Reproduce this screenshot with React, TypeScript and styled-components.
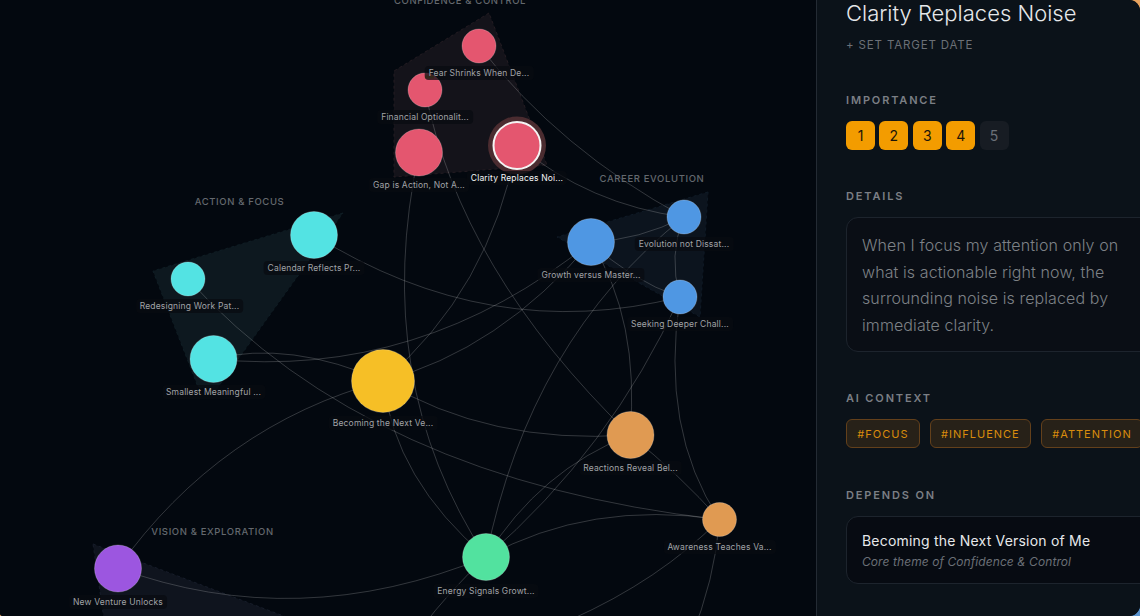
import React from "react";
import styled, { createGlobalStyle } from "styled-components";

const Global = createGlobalStyle`
  html, body { margin: 0; padding: 0; height: 100%; overflow: hidden; }
  body {
    background:
      radial-gradient(circle at 100% 0, #e8a35f 16px, transparent 16px),
      radial-gradient(circle at 100% 100%, #5b94cf 16px, transparent 16px),
      radial-gradient(circle at 0 100%, #e8a35f 6px, transparent 6px);
    font-family: Inter, "Liberation Sans", sans-serif;
  }
`;

const Shell = styled.div`
  width: 1140px;
  height: 616px;
  display: flex;
  overflow: hidden;
  border-radius: 0 11px 11px 3px;
  background: #03080f;
`;

const Canvas = styled.div`
  position: relative;
  flex: 0 0 816px;
  height: 616px;
  overflow: hidden;
  background: #03080f;
`;

const Graph = styled.svg`
  position: absolute;
  inset: 0;
  display: block;
`;

const NodeLabel = styled.div<{ $x: number; $y: number; $active?: boolean }>`
  position: absolute;
  left: ${(p) => p.$x}px;
  top: ${(p) => p.$y}px;
  transform: translate(-50%, -50%);
  padding: 2px 4px;
  border-radius: 4px;
  background: rgba(9, 11, 16, 0.72);
  color: ${(p) => (p.$active ? "#f4f5f6" : "#a1a3a7")};
  font-size: 8.5px;
  line-height: 10px;
  letter-spacing: 0.17px;
  white-space: nowrap;
`;

const ClusterLabel = styled.div<{ $x: number; $y: number }>`
  position: absolute;
  left: ${(p) => p.$x}px;
  top: ${(p) => p.$y}px;
  transform: translate(-50%, -50%);
  color: #64686e;
  font-size: 9.5px;
  line-height: 12px;
  font-weight: 500;
  letter-spacing: 0.62px;
  white-space: nowrap;
`;

const Panel = styled.aside`
  flex: 0 0 360px;
  height: 616px;
  box-sizing: border-box;
  padding-left: 29px;
  border-left: 1px solid #242b34;
  background: #0b1219;
  overflow: hidden;
`;

const Title = styled.h1`
  margin: 0;
  color: #e6e8ea;
  font-size: 22px;
  line-height: 26px;
  font-weight: 300;
  white-space: nowrap;
`;

const DateLink = styled.div`
  margin-top: 12px;
  color: #6b7077;
  font-size: 11.5px;
  line-height: 14px;
  letter-spacing: 0.85px;
`;

const Section = styled.section<{ $gap: number }>`
  margin-top: ${(p) => p.$gap}px;
`;

const SectionLabel = styled.h2`
  margin: 0 0 14px;
  color: #7b7f85;
  font-size: 11px;
  line-height: 14px;
  font-weight: 600;
  letter-spacing: 1.85px;
`;

const Scale = styled.div`
  display: flex;
  gap: 4.4px;
`;

const ScaleButton = styled.div<{ $on: boolean }>`
  width: 29px;
  height: 29px;
  display: flex;
  align-items: center;
  justify-content: center;
  border-radius: 6px;
  background: ${(p) => (p.$on ? "#f39c00" : "#171c23")};
  color: ${(p) => (p.$on ? "#1b1509" : "#6b7077")};
  font-size: 14px;
`;

const DetailBox = styled.div`
  width: 328px;
  height: 135px;
  box-sizing: border-box;
  padding: 14px 15px;
  border: 1px solid #1d242d;
  border-radius: 12px;
  background: #0a0e15;
  color: #7d8186;
  font-size: 16px;
  line-height: 26.5px;
  font-weight: 300;
  letter-spacing: 0.1px;
`;

const Line = styled.div`
  white-space: nowrap;
`;

const Tags = styled.div`
  display: flex;
  gap: 10px;
`;

const Tag = styled.div`
  flex: none;
  height: 29px;
  box-sizing: border-box;
  display: flex;
  align-items: center;
  padding: 0 10.3px;
  border: 1px solid #63401b;
  border-radius: 6px;
  background: #272118;
  color: #d98c0c;
  font-size: 11px;
  letter-spacing: 1px;
`;

const DependCard = styled.div`
  width: 328px;
  height: 68px;
  box-sizing: border-box;
  padding: 13.5px 15px;
  border: 1px solid #1d242d;
  border-radius: 12px;
  background: #070b12;
`;

const DependTitle = styled.div`
  color: #e6e8ea;
  font-size: 14px;
  line-height: 20px;
  letter-spacing: 0.2px;
`;

const DependSub = styled.div`
  margin-top: 3px;
  color: #6b7077;
  font-size: 12px;
  line-height: 15px;
  font-style: italic;
  letter-spacing: 0.08px;
  white-space: nowrap;
`;

const PINK = "#e4566f";
const CYAN = "#53e3e3";
const BLUE = "#4f97e3";
const ORANGE = "#e09a52";

const hulls = [
  { points: "489,13 394,71 394,177 547,165", fill: "#14131a", stroke: "#241c22" },
  { points: "343,213 153,271 198,387 216,390", fill: "#0d181f", stroke: "#0f1d24" },
  { points: "708,192 557,237 700,317", fill: "#0c141e", stroke: "#0f1a26" },
  { points: "93,544 400,660 110,660", fill: "#0f141e", stroke: "#171d2a" },
];

const edges = [
  "M479 46Q560 150 684 217",
  "M517 145Q590 205 684 217",
  "M425 90Q460 270 630 435",
  "M419 152Q370 380 486 557",
  "M383 381Q395 480 486 557",
  "M517 145Q490 290 383 381",
  "M591 242Q640 240 684 217",
  "M591 242Q630 280 680 297",
  "M684 217Q668 255 680 297",
  "M684 217Q530 340 486 557",
  "M680 297Q610 450 486 557",
  "M591 242Q640 320 630 435",
  "M680 297Q660 430 719.5 519.5",
  "M719.5 519.5Q715 580 690 640",
  "M630 435Q540 470 486 557",
  "M486 557Q590 500 719.5 519.5",
  "M383 381Q490 445 630 435",
  "M188 279Q370 480 719.5 519.5",
  "M213 359Q290 340 383 381",
  "M213 359Q420 380 591 242",
  "M383 381Q500 350 591 242",
  "M314 235Q490 345 680 297",
  "M486 557Q298 634 118 568",
  "M486 557Q450 590 420 630",
  "M719.5 519.5Q660 580 570 620",
  "M118 568Q220 425 383 381",
  "M630 435Q680 475 719.5 519.5",
];

const nodes = [
  { x: 479, y: 46, r: 17, c: PINK },
  { x: 425, y: 90, r: 17, c: PINK },
  { x: 419, y: 152.5, r: 23.5, c: PINK },
  { x: 314, y: 235, r: 23.5, c: CYAN },
  { x: 188, y: 279, r: 17, c: CYAN },
  { x: 213.5, y: 359, r: 23.5, c: CYAN },
  { x: 383, y: 381, r: 31.5, c: "#f6bf26" },
  { x: 591, y: 242, r: 23.5, c: BLUE },
  { x: 684, y: 217, r: 17, c: BLUE },
  { x: 680, y: 297, r: 17, c: BLUE },
  { x: 630.5, y: 435, r: 23.5, c: ORANGE },
  { x: 719.5, y: 519.5, r: 17, c: ORANGE },
  { x: 486, y: 557, r: 23.5, c: "#52e29f" },
  { x: 118, y: 568.5, r: 23.5, c: "#9c56e0" },
];

const nodeLabels = [
  { x: 479, y: 72.5, t: "Fear Shrinks When De..." },
  { x: 425, y: 116.5, t: "Financial Optionalit..." },
  { x: 419, y: 185, t: "Gap is Action, Not A..." },
  { x: 517, y: 178, t: "Clarity Replaces Noi...", active: true },
  { x: 314, y: 268, t: "Calendar Reflects Pr..." },
  { x: 189.5, y: 306, t: "Redesigning Work Pat..." },
  { x: 213.5, y: 392, t: "Smallest Meaningful ..." },
  { x: 383, y: 423, t: "Becoming the Next Ve..." },
  { x: 591, y: 275, t: "Growth versus Master..." },
  { x: 684, y: 244, t: "Evolution not Dissat..." },
  { x: 680, y: 324, t: "Seeking Deeper Chall..." },
  { x: 630.5, y: 468, t: "Reactions Reveal Bel..." },
  { x: 719.5, y: 546.5, t: "Awareness Teaches Va..." },
  { x: 486, y: 591, t: "Energy Signals Growt..." },
  { x: 118, y: 601.5, t: "New Venture Unlocks" },
];

const clusters = [
  { x: 460, y: 1, t: "CONFIDENCE & CONTROL" },
  { x: 239.5, y: 201.5, t: "ACTION & FOCUS" },
  { x: 652, y: 179, t: "CAREER EVOLUTION" },
  { x: 212.5, y: 532, t: "VISION & EXPLORATION" },
];

const details = [
  "When I focus my attention only on",
  "what is actionable right now, the",
  "surrounding noise is replaced by",
  "immediate clarity.",
];

export default function App() {
  return (
    <>
      <Global />
      <Shell>
        <Canvas>
          <Graph width="816" height="616" viewBox="0 0 816 616">
            {hulls.map((h) => (
              <polygon key={h.points} points={h.points} fill={h.fill} stroke={h.stroke} strokeDasharray="3 3" />
            ))}
            {edges.map((d) => (
              <path key={d} d={d} fill="none" stroke="rgba(255,255,255,0.19)" strokeWidth="1" />
            ))}
            {nodes.map((n) => (
              <circle key={`${n.x}-${n.y}`} cx={n.x} cy={n.y} r={n.r} fill={n.c} stroke="rgba(255,255,255,0.22)" strokeWidth="1" />
            ))}
            <circle cx="517" cy="145.5" r="29" fill="#4b2c30" />
            <circle cx="517" cy="145.5" r="23.5" fill={PINK} stroke="#f4f4f4" strokeWidth="2" />
            <rect x="425" y="75.5" width="9" height="3" fill="#a2703a" />
          </Graph>
          {clusters.map((c) => (
            <ClusterLabel key={c.t} $x={c.x} $y={c.y}>{c.t}</ClusterLabel>
          ))}
          {nodeLabels.map((l) => (
            <NodeLabel key={l.t} $x={l.x} $y={l.y} $active={l.active}>{l.t}</NodeLabel>
          ))}
        </Canvas>
        <Panel>
          <Title>Clarity Replaces Noise</Title>
          <DateLink>+ SET TARGET DATE</DateLink>
          <Section $gap={41}>
            <SectionLabel>IMPORTANCE</SectionLabel>
            <Scale>
              {[1, 2, 3, 4, 5].map((n) => (
                <ScaleButton key={n} $on={n < 5}>{n}</ScaleButton>
              ))}
            </Scale>
          </Section>
          <Section $gap={39}>
            <SectionLabel>DETAILS</SectionLabel>
            <DetailBox>
              {details.map((d) => (
                <Line key={d}>{d}</Line>
              ))}
            </DetailBox>
          </Section>
          <Section $gap={39}>
            <SectionLabel>AI CONTEXT</SectionLabel>
            <Tags>
              <Tag>#FOCUS</Tag>
              <Tag>#INFLUENCE</Tag>
              <Tag>#ATTENTION</Tag>
            </Tags>
          </Section>
          <Section $gap={40}>
            <SectionLabel>DEPENDS ON</SectionLabel>
            <DependCard>
              <DependTitle>Becoming the Next Version of Me</DependTitle>
              <DependSub>Core theme of Confidence &amp; Control</DependSub>
            </DependCard>
          </Section>
        </Panel>
      </Shell>
    </>
  );
}
